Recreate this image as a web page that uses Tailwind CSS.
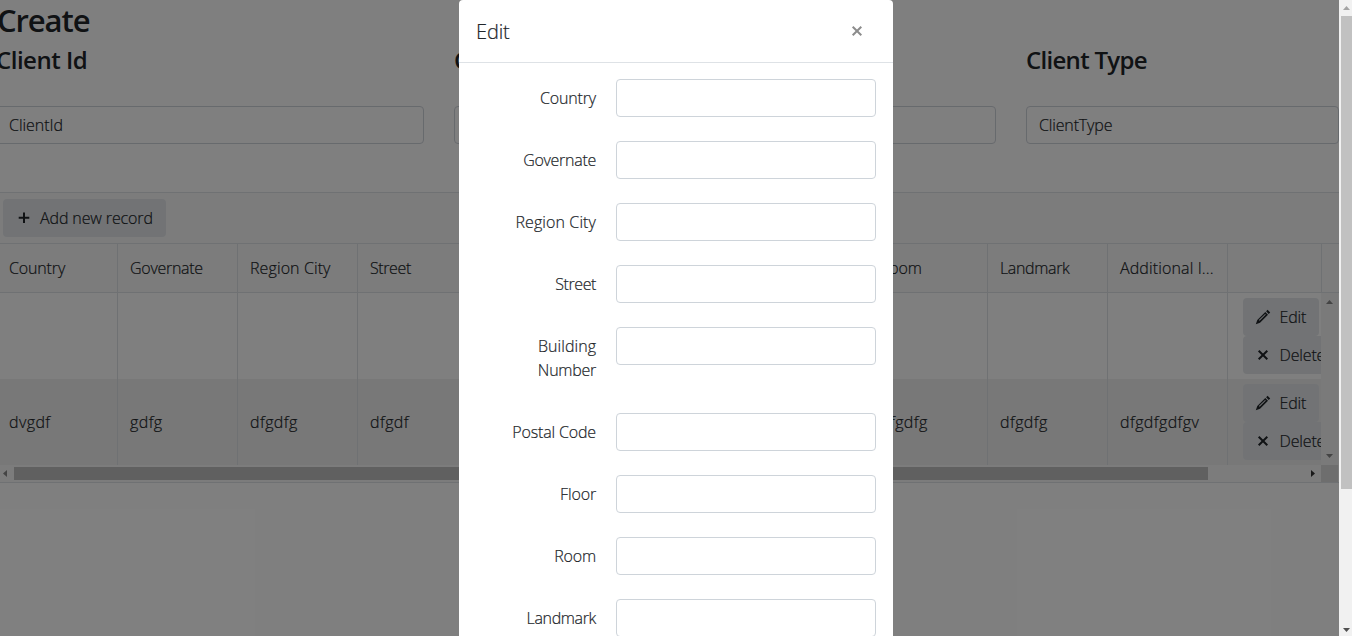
<!DOCTYPE html>
<html lang="en">
<head>
<meta charset="utf-8">
<title>Create</title>
<script src="https://cdn.jsdelivr.net/npm/@tailwindcss/browser@4"></script>
</head>
<body class="relative flex h-[636px] w-[1352px] overflow-hidden bg-white font-['Open_Sans','Noto_Sans',sans-serif] text-base font-light tracking-[-0.15px] text-[#212529] [-webkit-text-stroke:0.2px]">
<svg class="hidden">
  <symbol id="pencil" viewBox="0 0 16 16"><path fill="currentColor" fill-rule="evenodd" d="M12.600 .8 15.200 3.400 13.700 4.900 11.100 2.300ZM10.300 3 13 5.700 5 13.700 .8 15.200 2.300 11ZM10.100 4.900 3.900 11.100 4.600 11.800 10.800 5.600Z"/></symbol>
  <symbol id="cross" viewBox="0 0 16 16"><path stroke="currentColor" stroke-width="2" fill="none" d="M3.700 3.700 12.300 12.300M12.300 3.700 3.700 12.300"/></symbol>
</svg>
<main class="flex h-full w-[1339px] shrink-0 flex-col overflow-hidden">
  <h1 class="-ml-[3px] h-10 text-[31px] leading-10 font-semibold tracking-[-1.1px] [-webkit-text-stroke:0px]"><span>Create</span></h1>
  <div class="-ml-1 flex h-[104px] w-[1500px] shrink-0 gap-[30px] text-2xl font-semibold">
    <section class="w-[428px]"><h4 class="h-[66px] leading-10 tracking-[-0.5px] [-webkit-text-stroke:0px]"><span>Client Id</span></h4><div class="flex h-[38px] items-center rounded border border-[#ced4da] px-3 text-base font-light tracking-[-0.05px]"><span>ClientId</span></div></section>
    <section class="w-[542px]"><h4 class="h-[66px] leading-10 tracking-[-0.5px] [-webkit-text-stroke:0px]"><span>Client Name</span></h4><div class="h-[38px] rounded border border-[#ced4da]"></div></section>
    <section class="w-[343px]"><h4 class="h-[66px] leading-10 tracking-[-0.7px] [-webkit-text-stroke:0px]"><span>Client Type</span></h4><div class="flex h-[38px] w-[313px] items-center rounded border border-[#ced4da] px-3 text-base font-light tracking-[-0.15px]"><span>ClientType</span></div></section>
  </div>
  <div class="mt-12 flex h-[291px] shrink-0 flex-col border-y border-[#dee2e6]">
    <div class="flex h-[50px] shrink-0 items-center bg-[#f9f9f9] pl-[3px]">
      <div class="flex h-[38px] w-[163px] items-center gap-2 rounded bg-[#e4e7eb] pl-[13px]"><svg class="size-4 shrink-0" viewBox="0 0 16 16"><path d="M8 2.500V13M2.700 7.700H13.300" stroke="currentColor" stroke-width="2"/></svg><span class="whitespace-nowrap tracking-[-0.12px]">Add new record</span></div>
    </div>
    <div class="grid h-[50px] shrink-0 grid-cols-[118px_120px_120px_510px_120px_120px_120px_94px_17px] border-y border-[#dee2e6] bg-[#f9f9f9] leading-[49px] *:h-12 *:border-r *:border-[#dee2e6] *:whitespace-nowrap">
      <div class="pl-[9px]"><span>Country</span></div><div class="pl-3"><span class="tracking-[-0.28px]">Governate</span></div><div class="pl-3"><span class="tracking-[0.1px]">Region City</span></div><div class="pl-3"><span class="tracking-[-0.4px]">Street</span></div><div class="pl-3"><span>Room</span></div><div class="pl-3"><span class="tracking-[-0.35px]">Landmark</span></div><div class="pl-3"><span class="tracking-[0.12px]">Additional I...</span></div><div></div><div class="border-r-0!"></div>
    </div>
    <div class="flex h-[172px] shrink-0">
      <div class="w-[1321px] overflow-hidden">
        <div class="grid h-[86px] grid-cols-[118px_120px_120px_510px_120px_120px_120px_93px] *:border-r *:border-[#dee2e6]">
          <div></div><div></div><div></div><div></div><div></div><div></div><div></div>
          <div class="overflow-hidden border-r-0! pt-[5px] pl-[15px]">
            <div class="flex h-[38px] w-[76px] items-center gap-[8.5px] rounded bg-[#e4e7eb] pl-3"><svg class="size-4 shrink-0"><use href="#pencil"/></svg><span>Edit</span></div>
            <div class="flex h-[38px] w-[94px] items-center gap-[8.5px] rounded bg-[#e4e7eb] pl-3"><svg class="size-4 shrink-0"><use href="#cross"/></svg><span>Delete</span></div>
          </div>
        </div>
        <div class="grid h-[86px] grid-cols-[118px_120px_120px_510px_120px_120px_120px_93px] bg-[#f1f1f1] leading-[86px] tracking-[0.4px] *:h-[86px] *:border-r *:border-[#dee2e6]">
          <div class="pl-[9px]"><span>dvgdf</span></div><div class="pl-3"><span>gdfg</span></div><div class="pl-3"><span>dfgdfg</span></div><div class="pl-3"><span>dfgdf</span></div><div class="pl-3"><span>dfgdfg</span></div><div class="pl-3"><span>dfgdfg</span></div><div class="pl-3"><span>dfgdfgdfgv</span></div>
          <div class="overflow-hidden border-r-0! pt-[5px] pl-[15px] leading-6 tracking-[-0.15px]">
            <div class="flex h-[38px] w-[76px] items-center gap-[8.5px] rounded bg-[#e4e7eb] pl-3"><svg class="size-4 shrink-0"><use href="#pencil"/></svg><span>Edit</span></div>
            <div class="flex h-[38px] w-[94px] items-center gap-[8.5px] rounded bg-[#e4e7eb] pl-3"><svg class="size-4 shrink-0"><use href="#cross"/></svg><span>Delete</span></div>
          </div>
        </div>
      </div>
      <div class="flex w-[17px] flex-col items-center justify-between bg-[#f4f4f4] pt-[7px] pb-[7px]">
        <svg class="h-1 w-[7px]" viewBox="0 0 7 4"><path d="M3.500 0 7 4H0Z" fill="#888"/></svg>
        <svg class="h-1 w-[7px]" viewBox="0 0 7 4"><path d="M3.500 4 7 0H0Z" fill="#888"/></svg>
      </div>
    </div>
    <div class="flex h-[17px] shrink-0 items-center bg-[#f9f9f9]">
      <svg class="ml-[3px] h-[7px] w-1" viewBox="0 0 4 7"><path d="M0 3.500 4 0V7Z" fill="#888"/></svg>
      <div class="ml-[7px] h-[13px] w-[1194px] bg-[#c1c1c1]"></div>
      <svg class="ml-[103px] h-[7px] w-1" viewBox="0 0 4 7"><path d="M4 3.500 0 0V7Z" fill="#333"/></svg>
      <div class="ml-1.5 h-[17px] w-[17px] bg-[#dcdcdc]"></div>
    </div>
  </div>
</main>
<aside class="z-20 flex w-[13px] shrink-0 flex-col items-center bg-[#f1f1f1] pl-0.5">
  <svg class="mt-1.5 h-1 w-[7px] shrink-0" viewBox="0 0 7 4"><path d="M3.500 0 7 4H0Z" fill="#a3a3a3"/></svg>
  <div class="mt-1.5 h-[473px] w-[11px] shrink-0 bg-[#c1c1c1]"></div>
  <svg class="mt-[139px] h-1 w-[7px] shrink-0" viewBox="0 0 7 4"><path d="M3.500 4 7 0H0Z" fill="#505050"/></svg>
</aside>
<div class="absolute inset-y-0 left-0 z-10 w-[1339px] bg-black/50"></div>
<div class="absolute top-0 left-[459px] z-10 h-[636px] w-[434px] overflow-hidden rounded-t bg-white">
  <header class="flex h-[63px] items-center justify-between border-b border-[#dee2e6] pr-7 pl-[17px] text-xl"><span class="mt-0.5">Edit</span><svg class="size-4 text-[#8c8c8c]"><use href="#cross"/></svg></header>
  <form class="flex flex-col gap-6 pt-4 pr-[17px] pl-[17px]">
    <div class="flex h-[38px] gap-5"><label class="w-[120px] pt-[7px] text-right leading-6"><span>Country</span></label><div class="h-[38px] w-[260px] rounded border border-[#ced4da]"></div></div>
    <div class="flex h-[38px] gap-5"><label class="w-[120px] pt-[7px] text-right leading-6"><span class="tracking-[-0.28px]">Governate</span></label><div class="h-[38px] w-[260px] rounded border border-[#ced4da]"></div></div>
    <div class="flex h-[38px] gap-5"><label class="w-[120px] pt-[7px] text-right leading-6"><span class="tracking-[0.1px]">Region City</span></label><div class="h-[38px] w-[260px] rounded border border-[#ced4da]"></div></div>
    <div class="flex h-[38px] gap-5"><label class="w-[120px] pt-[7px] text-right leading-6"><span class="tracking-[-0.4px]">Street</span></label><div class="h-[38px] w-[260px] rounded border border-[#ced4da]"></div></div>
    <div class="flex h-[62px] gap-5"><label class="w-[120px] pt-[7px] text-right leading-6"><span class="tracking-[0.05px]">Building</span><br><span class="tracking-[-0.25px]">Number</span></label><div class="h-[38px] w-[260px] rounded border border-[#ced4da]"></div></div>
    <div class="flex h-[38px] gap-5"><label class="w-[120px] pt-[7px] text-right leading-6"><span>Postal Code</span></label><div class="h-[38px] w-[260px] rounded border border-[#ced4da]"></div></div>
    <div class="flex h-[38px] gap-5"><label class="w-[120px] pt-[7px] text-right leading-6"><span>Floor</span></label><div class="h-[38px] w-[260px] rounded border border-[#ced4da]"></div></div>
    <div class="flex h-[38px] gap-5"><label class="w-[120px] pt-[7px] text-right leading-6"><span>Room</span></label><div class="h-[38px] w-[260px] rounded border border-[#ced4da]"></div></div>
    <div class="flex h-[38px] gap-5"><label class="w-[120px] pt-[7px] text-right leading-6"><span class="tracking-[-0.35px]">Landmark</span></label><div class="h-[38px] w-[260px] rounded border border-[#ced4da]"></div></div>
  </form>
</div>
</body>
</html>
